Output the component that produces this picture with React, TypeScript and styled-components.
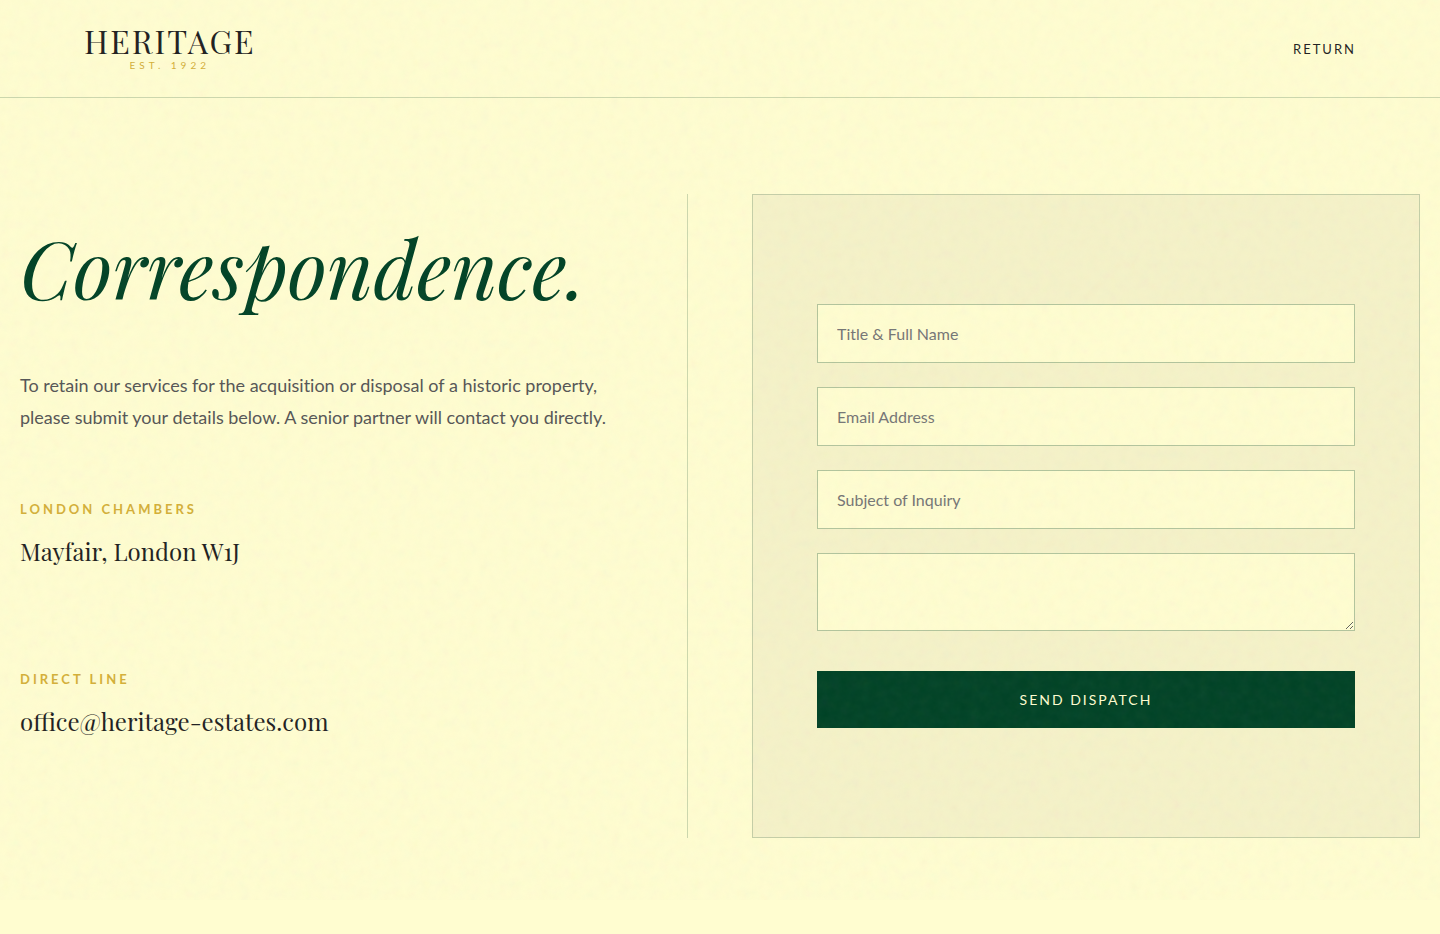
import React from "react";
import styled, { createGlobalStyle } from "styled-components";

const color = {
  cream: "#fffdd0",
  panel: "#f5f2c8",
  green: "#004225",
  gold: "#d4af37",
  ink: "#1f1f1f",
  body: "#555555",
  rule: "rgba(0, 66, 37, 0.2)",
  field: "rgba(0, 66, 37, 0.3)",
};

const serif = `"Playfair Display", "Liberation Serif", serif`;
const sans = `Lato, "Liberation Sans", sans-serif`;

const GlobalStyle = createGlobalStyle`
  *, *::before, *::after { box-sizing: border-box; }
  body {
    margin: 0;
    background: ${color.cream};
    color: ${color.ink};
    font-family: ${sans};
  }
`;

const Page = styled.div`
  position: relative;
  min-height: 100vh;
`;

const PaperGrain = styled.svg`
  position: absolute;
  top: 0;
  left: 0;
  width: 100%;
  height: 900px;
  opacity: 0.05;
  pointer-events: none;
`;

const Header = styled.header`
  border-bottom: 1px solid ${color.rule};
`;

const HeaderInner = styled.div`
  display: flex;
  align-items: center;
  justify-content: space-between;
  max-width: 1400px;
  margin: 0 auto;
  padding: 24px 64px;
`;

const Brand = styled.div`
  display: flex;
  flex-direction: column;
  align-items: center;
`;

const BrandName = styled.span`
  font-family: ${serif};
  font-size: 32px;
  line-height: 33px;
  letter-spacing: 2px;
`;

const BrandDate = styled.span`
  font-size: 10px;
  line-height: 16px;
  letter-spacing: 4px;
  color: ${color.gold};
`;

const ReturnLink = styled.a`
  font-size: 13px;
  line-height: 20px;
  letter-spacing: 2px;
  color: ${color.ink};
  text-decoration: none;
`;

const Main = styled.main`
  display: grid;
  grid-template-columns: 1fr 1fr;
  gap: 64px;
  max-width: 1400px;
  margin: 0 auto;
  padding: 96px 0;
`;

const Intro = styled.section`
  min-height: 644px;
  padding: 32px 64px 32px 0;
  border-right: 1px solid ${color.rule};
`;

const Title = styled.h1`
  margin: 0 0 61px;
  font-family: ${serif};
  font-size: 80px;
  line-height: 82px;
  font-style: italic;
  font-weight: 400;
  color: ${color.green};
`;

const Lead = styled.p`
  margin: 0 0 65px;
  font-size: 18px;
  line-height: 32px;
  font-variant-ligatures: none;
  color: ${color.body};
`;

const Contact = styled.div`
  margin-bottom: 98px;
  &:last-child { margin-bottom: 0; }
`;

const ContactLabel = styled.h2`
  margin: 0 0 12px;
  font-size: 13px;
  line-height: 22px;
  font-weight: 700;
  letter-spacing: 3px;
  color: ${color.gold};
`;

const ContactValue = styled.p`
  margin: 0;
  font-family: ${serif};
  font-size: 24px;
  line-height: 38px;
`;

const Form = styled.form`
  display: flex;
  flex-direction: column;
  justify-content: center;
  gap: 24px;
  padding: 64px;
  background: ${color.panel};
  border: 1px solid ${color.rule};
`;

const Field = styled.input`
  width: 100%;
  height: 59px;
  padding: 0 19px;
  font-family: ${sans};
  font-size: 16px;
  color: ${color.ink};
  background: ${color.cream};
  border: 1px solid ${color.field};
  border-radius: 0;
  &::placeholder { color: #757575; }
`;

const Message = styled.textarea`
  display: block;
  width: 100%;
  height: 78px;
  padding: 19px;
  font-family: ${sans};
  font-size: 16px;
  color: ${color.ink};
  background: ${color.cream};
  border: 1px solid ${color.field};
  border-radius: 0;
`;

const SendButton = styled.button`
  height: 57px;
  margin-top: 16px;
  font-family: ${sans};
  font-size: 14px;
  letter-spacing: 2px;
  color: ${color.cream};
  background: ${color.green};
  border: 0;
  cursor: pointer;
`;

const contacts = [
  { label: "LONDON CHAMBERS", value: "Mayfair, London W1J" },
  { label: "DIRECT LINE", value: "office@heritage-estates.com" },
];

export default function App() {
  return (
    <Page>
      <GlobalStyle />
      <Header>
        <HeaderInner>
          <Brand>
            <BrandName>HERITAGE</BrandName>
            <BrandDate>EST. 1922</BrandDate>
          </Brand>
          <ReturnLink href="#">RETURN</ReturnLink>
        </HeaderInner>
      </Header>
      <Main>
        <Intro>
          <Title>Correspondence.</Title>
          <Lead>
            To retain our services for the acquisition or disposal of a historic
            property, please submit your details below. A senior partner will
            contact you directly.
          </Lead>
          {contacts.map((c) => (
            <Contact key={c.label}>
              <ContactLabel>{c.label}</ContactLabel>
              <ContactValue>{c.value}</ContactValue>
            </Contact>
          ))}
        </Intro>
        <Form onSubmit={(e) => e.preventDefault()}>
          <Field type="text" aria-label="Title & Full Name" placeholder="Title & Full Name" />
          <Field type="email" aria-label="Email Address" placeholder="Email Address" />
          <Field type="text" aria-label="Subject of Inquiry" placeholder="Subject of Inquiry" />
          <Message aria-label="Message" />
          <SendButton type="submit">SEND DISPATCH</SendButton>
        </Form>
      </Main>
      <PaperGrain aria-hidden="true">
        <filter id="grain" x="0" y="0" width="100%" height="100%">
          <feTurbulence type="fractalNoise" baseFrequency="0.1" numOctaves="4" />
        </filter>
        <rect width="100%" height="100%" filter="url(#grain)" />
      </PaperGrain>
    </Page>
  );
}
